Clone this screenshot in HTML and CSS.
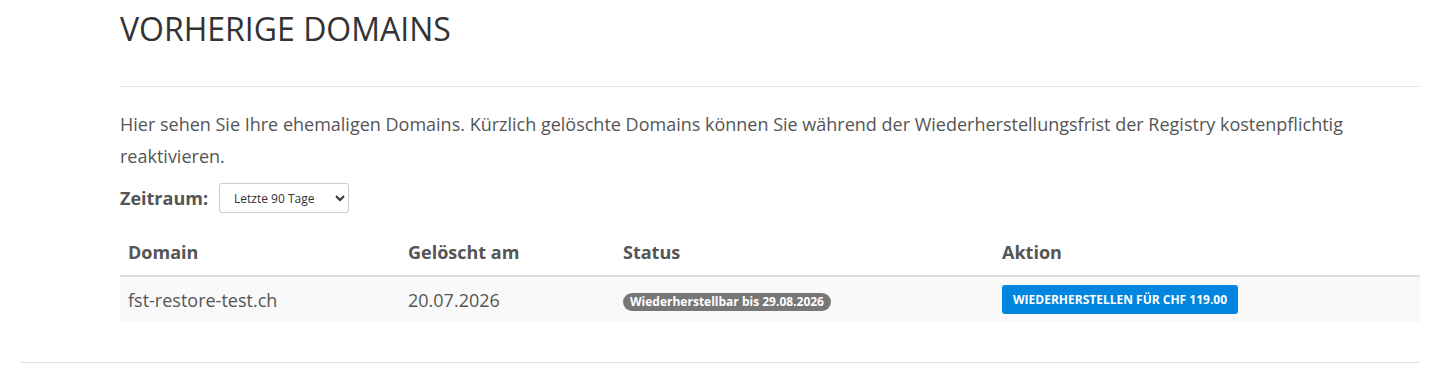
FILE: index.html
```html
<!DOCTYPE html>
<html lang="de">
<head>
  <meta charset="UTF-8">
  <title>Vorherige Domains</title>
  <link rel="stylesheet" href="styles.css">
</head>
<body>
  <div class="page">
    <div class="content">
      <h1>Vorherige Domains</h1>
      <hr class="sep">

      <p class="intro">Hier sehen Sie Ihre ehemaligen Domains. Kürzlich gelöschte Domains können Sie während der Wiederherstellungsfrist der Registry kostenpflichtig reaktivieren.</p>

      <div class="filter">
        <label for="zeitraum">Zeitraum:</label>
        <select id="zeitraum">
          <option>Letzte 30 Tage</option>
          <option selected>Letzte 90 Tage</option>
          <option>Letztes Jahr</option>
        </select>
      </div>

      <table class="domains">
        <thead>
          <tr>
            <th class="c-domain">Domain</th>
            <th class="c-date">Gelöscht am</th>
            <th class="c-status">Status</th>
            <th>Aktion</th>
          </tr>
        </thead>
        <tbody>
          <tr>
            <td>fst-restore-test.ch</td>
            <td>20.07.2026</td>
            <td><span class="badge">Wiederherstellbar bis 29.08.2026</span></td>
            <td><button class="btn-restore">Wiederherstellen für CHF 119.00</button></td>
          </tr>
        </tbody>
      </table>
    </div>
    <hr class="footer-sep">
  </div>
</body>
</html>
```

FILE: styles.css
```css
body {
  margin: 0;
  font-family: "Open Sans", sans-serif;
  color: #555;
  background: #fff;
}
.page {
  padding: 0 20px;
}
.content {
  padding-left: 100px;
}
h1 {
  margin: 0;
  padding-top: 9px;
  font-size: 32px;
  font-weight: 400;
  line-height: 40px;
  color: #333;
  text-transform: uppercase;
}
.sep {
  border: 0;
  border-top: 1px solid #e3e3e3;
  margin: 37px 0 0;
}
.intro {
  margin: 21px 0 0;
  font-size: 18px;
  line-height: 32px;
  color: #555;
}
.filter {
  display: flex;
  align-items: center;
  gap: 11px;
  margin-top: 11px;
}
.filter label {
  font-weight: 700;
  font-size: 18px;
}
.filter select {
  font-family: "Open Sans", sans-serif;
  font-size: 12px;
  width: 130px;
  height: 30px;
  padding: 0 6px 0 10px;
  border: 1px solid #ccc;
  border-radius: 3px;
  background: #fff;
  color: #333;
}
.domains {
  width: 100%;
  border-collapse: collapse;
  margin-top: 17px;
}
.domains th,
.domains td {
  text-align: left;
  padding: 0 8px;
  font-size: 18px;
  vertical-align: middle;
}
.domains th {
  font-weight: 700;
  line-height: 24px;
  padding-top: 10px;
  padding-bottom: 11px;
  border-bottom: 2px solid #ddd;
}
.domains td {
  background: #f9f9f9;
  height: 45px;
}
.c-domain { width: 264px; }
.c-date { width: 199px; }
.c-status { width: 363px; }
.badge {
  display: inline-block;
  background: #777;
  color: #fff;
  font-size: 12px;
  font-weight: 700;
  line-height: 18px;
  padding: 0 7px;
  border-radius: 9px;
  vertical-align: middle;
}
.btn-restore {
  font-family: "Open Sans", sans-serif;
  font-size: 12px;
  font-weight: 700;
  text-transform: uppercase;
  color: #fff;
  background: #0086e0;
  border: 0;
  border-radius: 3px;
  height: 29px;
  padding: 0 11px;
  vertical-align: middle;
}
.footer-sep {
  border: 0;
  border-top: 1px solid #e0e0e0;
  margin: 40px 0 0;
}
```
